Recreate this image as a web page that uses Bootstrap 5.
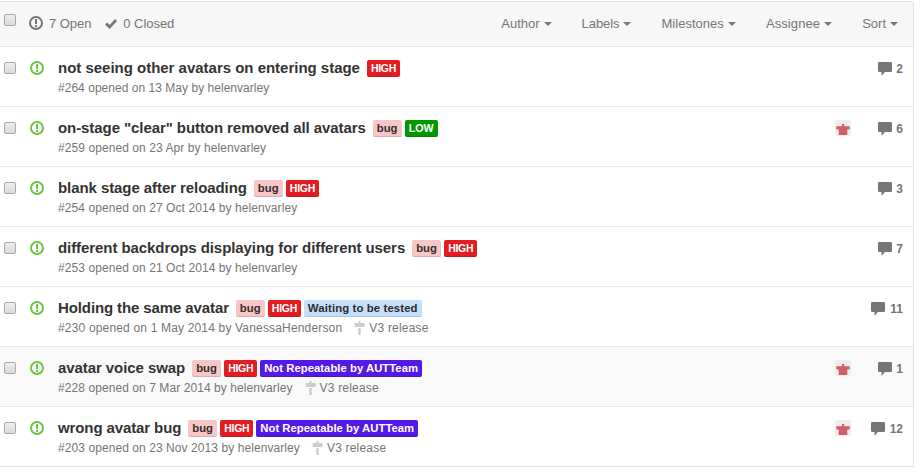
<!DOCTYPE html>
<html lang="en">
<head>
<meta charset="utf-8">
<title>Issues</title>
<link href="https://cdn.jsdelivr.net/npm/bootstrap@5.3.0/dist/css/bootstrap.min.css" rel="stylesheet">
<style>
body{font-family:"Liberation Sans",Arial,sans-serif;font-size:13px;line-height:20px;color:#767676;background:#fff;overflow:hidden}
svg{display:block;flex:none;fill:currentColor}
.issues{width:914px;margin-top:1px;border:1px solid #e2e2e2;border-left:0;border-top-right-radius:3px;padding-left:4px;background:#fff}
.issues-head{height:45px;margin-left:-4px;padding-left:4px;background:#f7f7f7;border-bottom:1px solid #e7e7e7;border-top-right-radius:2px}
.head-state{margin:14px 6px 0 13px}
.counts{padding-top:12px;letter-spacing:-.05px}
.done{margin:17px 6px 0 14px}
.filters{padding:12px 15px 0 0;gap:30px}
.filter::after{content:"";display:inline-block;border:4px solid transparent;border-top-color:currentColor;border-bottom:0;margin-left:4px;vertical-align:2px}
.filter:nth-child(2){letter-spacing:-.08px}
.filter:nth-child(3){letter-spacing:.03px}
.filter:nth-child(4){letter-spacing:.1px}
.issue{height:60px;margin-left:-4px;padding:11px 10px 0 4px;border-bottom:1px solid #e9e9e9}
.issue:last-child{border-bottom:0;height:59px}
.issue.hovered{background:#f9f9f9}
.tick{appearance:none;flex:none;width:12px;height:12px;margin:4px 0 0;border:1px solid #a9a9a9;border-radius:2px;background:linear-gradient(#eee,#d9d9d9)}
.issues-head .tick{margin-top:12px}
.state{margin:3px 14px 0 14px;color:#6cc644}
.title{font-size:15px;font-weight:bold;color:#333;line-height:20px;margin-right:7px;white-space:nowrap;letter-spacing:-.075px}
.issue:nth-of-type(1) .title{letter-spacing:-.015px}
.issue:nth-of-type(5) .title,.issue:nth-of-type(7) .title{letter-spacing:-.11px}
.tag{height:17px;line-height:16px;padding-left:4px;font-size:11px;font-weight:bold;border-radius:2px;margin:2px 3px 0 0;box-shadow:inset 0 -1px 0 rgba(0,0,0,.12);white-space:nowrap}
.tag-bug{background:#f7c6c7;color:#332d2d;width:29px;font-size:11.3px}
.tag-high{background:#e11d21;color:#fff;width:33px;font-size:10.5px;letter-spacing:-.3px}
.tag-low{background:#009800;color:#fff;width:33px;font-size:10.7px;letter-spacing:-.1px}
.tag-wait{background:#c7def8;color:#282d33;width:118px;font-size:11.4px;letter-spacing:.1px}
.tag-not{background:#5319e7;color:#fff;width:162px;font-size:11.3px;letter-spacing:.03px}
.meta{font-size:12px;line-height:18px;margin-top:1px;color:#767676;letter-spacing:.075px}
.issue:nth-of-type(1) .meta{letter-spacing:.03px}
.issue:nth-of-type(5) .meta{letter-spacing:.17px}
.meta .release{letter-spacing:.2px}
.pole{margin:2px 3px 0 12px;color:#ccc}
.face{margin:2px 0 0}
.talk{width:52px;font-size:12px;font-weight:bold;margin-top:1px}
.talk svg{margin-top:3px;margin-right:4px}
.issue:nth-of-type(5) .talk svg,.issue:nth-of-type(7) .talk svg{margin-right:5px}
</style>
<script src="https://cdn.jsdelivr.net/npm/bootstrap@5.3.0/dist/js/bootstrap.bundle.min.js"></script>
</head>
<body>
<svg width="0" height="0" class="position-absolute" aria-hidden="true">
<symbol id="open" viewBox="0 0 14 14"><circle cx="7" cy="7" r="6" fill="none" stroke="currentColor" stroke-width="2"/><path d="M6 3h2v5H6zM6 9h2v2H6z"/></symbol>
<symbol id="check" viewBox="0 0 12 10"><path d="M10 0 12 2 4.700 10 0 5.500 2 3.500 4.700 6z"/></symbol>
<symbol id="comment" viewBox="0 0 14 14"><path d="M1.200 0h11.600Q14 0 14 1.200V8.700Q14 10 12.800 10H7L3.500 13.700V10H1.200Q0 10 0 8.700V1.200Q0 0 1.200 0z"/></symbol>
<symbol id="sign" viewBox="0 0 12 14"><path d="M4.500 0h2v2h3.200L11.300 4 9.700 6H.6V5L1 4 .6 3V2h3.900zM4.300 7h2.400v7H4.300z"/></symbol>
<symbol id="face" viewBox="0 0 16 16"><rect width="16" height="16" rx="2" fill="#eee"/><path fill="#d15c6a" d="M7 4h2.200v2.300h5.500v3.300h-2.400V15H3.700V9.600H1.300V6.300H7z"/></symbol>
</svg>
<main class="issues">
<header class="issues-head d-flex">
<input type="checkbox" class="tick" aria-label="Select all">
<svg class="head-state" width="14" height="14"><use href="#open"/></svg>
<span class="counts">7 Open</span>
<svg class="done" width="12" height="10"><use href="#check"/></svg>
<span class="counts">0 Closed</span>
<nav class="filters d-flex ms-auto"><span class="filter">Author</span><span class="filter">Labels</span><span class="filter">Milestones</span><span class="filter">Assignee</span><span class="filter">Sort</span></nav>
</header>

<article class="issue d-flex"><input type="checkbox" class="tick" aria-label="Select"><svg class="state" width="14" height="14"><use href="#open"/></svg>
<div class="flex-grow-1"><div class="d-flex"><span class="title">not seeing other avatars on entering stage</span><span class="tag tag-high">HIGH</span></div><div class="meta d-flex"><span>#264 opened on 13 May by helenvarley</span></div></div>
<div class="talk d-flex justify-content-end"><svg width="14" height="14"><use href="#comment"/></svg>2</div></article>

<article class="issue d-flex"><input type="checkbox" class="tick" aria-label="Select"><svg class="state" width="14" height="14"><use href="#open"/></svg>
<div class="flex-grow-1"><div class="d-flex"><span class="title">on-stage "clear" button removed all avatars</span><span class="tag tag-bug">bug</span><span class="tag tag-low">LOW</span></div><div class="meta d-flex"><span>#259 opened on 23 Apr by helenvarley</span></div></div>
<svg class="face" width="16" height="16"><use href="#face"/></svg><div class="talk d-flex justify-content-end"><svg width="14" height="14"><use href="#comment"/></svg>6</div></article>

<article class="issue d-flex"><input type="checkbox" class="tick" aria-label="Select"><svg class="state" width="14" height="14"><use href="#open"/></svg>
<div class="flex-grow-1"><div class="d-flex"><span class="title">blank stage after reloading</span><span class="tag tag-bug">bug</span><span class="tag tag-high">HIGH</span></div><div class="meta d-flex"><span>#254 opened on 27 Oct 2014 by helenvarley</span></div></div>
<div class="talk d-flex justify-content-end"><svg width="14" height="14"><use href="#comment"/></svg>3</div></article>

<article class="issue d-flex"><input type="checkbox" class="tick" aria-label="Select"><svg class="state" width="14" height="14"><use href="#open"/></svg>
<div class="flex-grow-1"><div class="d-flex"><span class="title">different backdrops displaying for different users</span><span class="tag tag-bug">bug</span><span class="tag tag-high">HIGH</span></div><div class="meta d-flex"><span>#253 opened on 21 Oct 2014 by helenvarley</span></div></div>
<div class="talk d-flex justify-content-end"><svg width="14" height="14"><use href="#comment"/></svg>7</div></article>

<article class="issue d-flex"><input type="checkbox" class="tick" aria-label="Select"><svg class="state" width="14" height="14"><use href="#open"/></svg>
<div class="flex-grow-1"><div class="d-flex"><span class="title">Holding the same avatar</span><span class="tag tag-bug">bug</span><span class="tag tag-high">HIGH</span><span class="tag tag-wait">Waiting to be tested</span></div><div class="meta d-flex"><span>#230 opened on 1 May 2014 by VanessaHenderson</span><svg class="pole" width="12" height="14"><use href="#sign"/></svg><span class="release">V3 release</span></div></div>
<div class="talk d-flex justify-content-end"><svg width="14" height="14"><use href="#comment"/></svg>11</div></article>

<article class="issue hovered d-flex"><input type="checkbox" class="tick" aria-label="Select"><svg class="state" width="14" height="14"><use href="#open"/></svg>
<div class="flex-grow-1"><div class="d-flex"><span class="title">avatar voice swap</span><span class="tag tag-bug">bug</span><span class="tag tag-high">HIGH</span><span class="tag tag-not">Not Repeatable by AUTTeam</span></div><div class="meta d-flex"><span>#228 opened on 7 Mar 2014 by helenvarley</span><svg class="pole" width="12" height="14"><use href="#sign"/></svg><span class="release">V3 release</span></div></div>
<svg class="face" width="16" height="16"><use href="#face"/></svg><div class="talk d-flex justify-content-end"><svg width="14" height="14"><use href="#comment"/></svg>1</div></article>

<article class="issue d-flex"><input type="checkbox" class="tick" aria-label="Select"><svg class="state" width="14" height="14"><use href="#open"/></svg>
<div class="flex-grow-1"><div class="d-flex"><span class="title">wrong avatar bug</span><span class="tag tag-bug">bug</span><span class="tag tag-high">HIGH</span><span class="tag tag-not">Not Repeatable by AUTTeam</span></div><div class="meta d-flex"><span>#203 opened on 23 Nov 2013 by helenvarley</span><svg class="pole" width="12" height="14"><use href="#sign"/></svg><span class="release">V3 release</span></div></div>
<svg class="face" width="16" height="16"><use href="#face"/></svg><div class="talk d-flex justify-content-end"><svg width="14" height="14"><use href="#comment"/></svg>12</div></article>
</main>
</body>
</html>
